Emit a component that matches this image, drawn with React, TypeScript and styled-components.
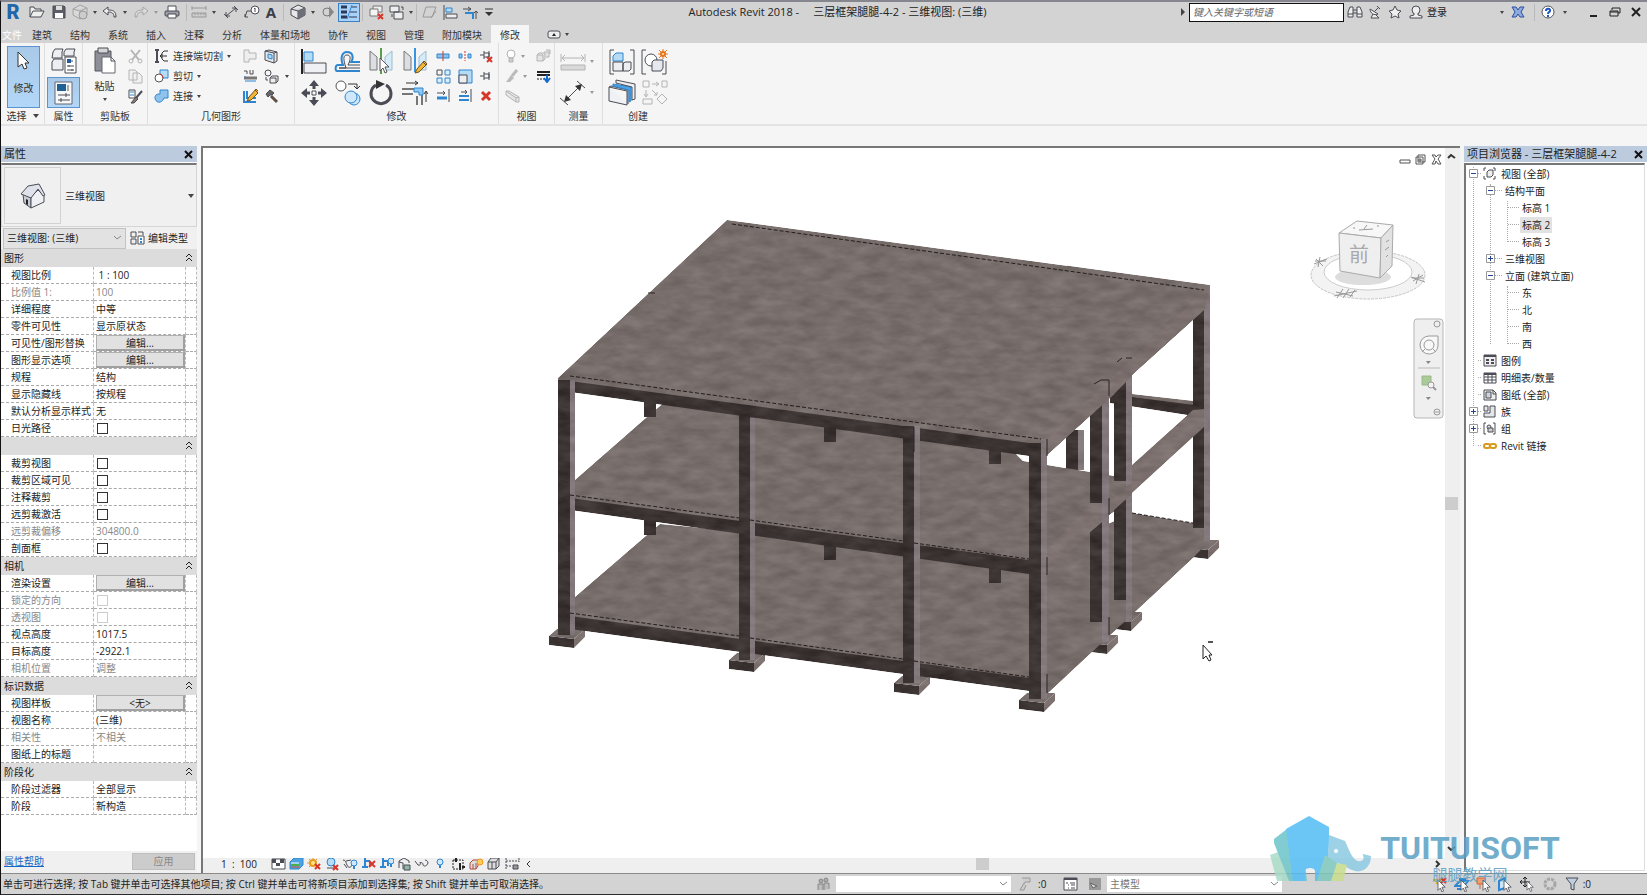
import React from 'react';
import styled, { createGlobalStyle, css } from 'styled-components';

const Global = createGlobalStyle`
  *, *::before, *::after { box-sizing: border-box; }
  body { margin: 0; background: #f5f5f5; }
  body, button, input, select, table {
    font-family: "Open Sans", "Noto Sans CJK SC", sans-serif;
    font-size: 10px;
    line-height: 14px;
    color: #222;
  }
  button, select, input { margin: 0; padding: 0; }
  ul { list-style: none; margin: 0; padding: 0; }
`;

/* ---------- icon drawings ---------- */

const D = '#4b4c55';
const B = '#2f86d0';
const L = '#b5dbf5';
const G = '#b4b4b4';
const RED = '#d8352a';

type IconDef = [number, number, React.ReactNode];

const cursor = 'M0 0V13L3 10L5 15L7 14L5 9H9Z';

const redX = (x: number, y: number, s = 5) => (
  <path d={`M${x} ${y}l${s} ${s}m0 ${-s}l${-s} ${s}`} stroke={RED} strokeWidth="2" />
);
const bulb = (x: number, y: number) => (
  <g><circle cx={x} cy={y} r="3" fill="#cfe8fb" stroke={B} /><path d={`M${x} ${y + 3}v3`} stroke={B} strokeWidth="2" /></g>
);
const pencil = (x: number, y: number) => (
  <g transform={`translate(${x} ${y})`}>
    <path d="M0 12L2 8L9 0L12 3L4 11Z" fill="#f2b632" stroke="#6b5424" /><path d="M8 1L11 4" stroke="#8b3d3d" />
  </g>
);
const cube = (c: string, f: string) => (
  <path d="M1 5L8 1L15 4V11L8 15L1 11ZM1 5L8 7L15 4M8 7V15" stroke={c} fill={f} />
);

const ICONS: Record<string, IconDef> = {
  open: [16, 14, <path d="M1 12V2H5L6 4H12V6M1 12L4 6H15L12 12Z" fill="#eee" />],
  save: [14, 14, <><path d="M1 1H12L13 2V13H1Z" fill="#5c5e66" /><path d="M4 1H10V5H4Z" fill="#ddd" stroke="none" /><path d="M3 8H11V13H3Z" fill="#fff" stroke="none" /></>],
  sync: [16, 16, <>{cube('#a2a2a2', '#d8d8d8')}<circle cx="11" cy="11" r="4" fill="#ccc" stroke="#999" /></>],
  undo: [16, 14, <path d="M6 2L1 6L6 10V7C10 7 12 8 12 12H14C14 6 11 5 6 5Z" fill="#eee" />],
  redo: [16, 14, <path d="M10 2L15 6L10 10V7C6 7 4 8 4 12H2C2 6 5 5 10 5Z" fill="#ddd" stroke="#a5a5a5" />],
  print: [16, 14, <><path d="M4 6V1H12V6" fill="#fff" /><rect x="1" y="6" width="14" height="5" rx="1" fill="#9c9da4" /><path d="M4 9H12V13H4Z" fill="#fff" /></>],
  ruler: [16, 14, <><path d="M1 3H15M1 1V5M15 1V5" stroke="#999" /><path d="M1 8H15V12H1ZM4 8V10M7 8V10M10 8V10M13 8V10" stroke="#999" fill="#ccc" /></>],
  dim: [16, 14, <path d="M3 11L13 3M1 9L5 13M11 1L15 5M3 11V7M3 11H7M13 3H9M13 3V7" />],
  tag: [16, 14, <><circle cx="11" cy="5" r="4" fill="#fff" /><path d="M11 3V7M10 4L11 3M7 6H3L1 12M1 9V12H4" /></>],
  cube: [16, 16, <>{cube(D, '#e8e8ea')}<path d="M8 7L15 4V11L8 15Z" fill="#6c6e78" stroke="none" /></>],
  section: [14, 14, <><circle cx="6" cy="7" r="4" stroke="#777" /><path d="M8 1L13 7L8 13Z" fill="#888" stroke="none" /></>],
  thin: [18, 14, <><path d="M1 2H7M1 7H7M1 12H7" stroke="#2b3a5a" strokeWidth="3" /><path d="M11 2H17M10 7H17M9 12H17" stroke="#2b3a5a" /><path d="M12 0L7 14" stroke={B} /></>],
  closeHidden: [15, 15, <><path d="M4 1H13V7H4Z" fill="#eee" stroke="#777" /><path d="M1 4H9V11H1Z" fill="#f4f4f4" stroke="#777" />{redX(9, 9)}</>],
  windows: [16, 15, <><path d="M1 1H10V7H1ZM5 7H14V14H5Z" fill="#eee" /><path d="M12 2H14V5M3 9V12" /></>],
  slope: [16, 14, <path d="M4 2H14L10 12H1ZM14 6L9 13" stroke="#999" />],
  align: [15, 15, <><path d="M1 0V15" /><path d="M3 3H9V7H3Z" fill={L} stroke={B} /><path d="M3 9H14V13H3Z" fill="#eee" /></>],
  trim: [16, 15, <><path d="M1 4H9M9 4L6 2M9 4L6 6" /><path d="M3 8H11V14" stroke={B} strokeWidth="2" /><path d="M14 14V6M12 8L14 6L16 8" /></>],
  customize: [10, 9, <><path d="M1 1H9" stroke="#333" /><path d="M1 4H9L5 8Z" fill="#333" stroke="none" /></>],
  binoculars: [16, 14, <path d="M1 12V7L3 2H6V12ZM15 12V7L13 2H10V12ZM6 5H10M6 8H10M1 9H6M10 9H15" fill="#eee" />],
  dish: [14, 14, <path d="M2 4C2 8 6 11 10 9ZM7 6L11 2M9 1L12 4M5 9L3 13H11L8 10" fill="#eee" />],
  star: [14, 14, <path d="M7 1L9 5L13 6L10 9L11 13L7 11L3 13L4 9L1 6L5 5Z" fill="#eee" />],
  user: [14, 14, <><circle cx="7" cy="5" r="4" fill="#eee" /><path d="M5 8V10L1 11V13H13V11L9 10V8" fill="#eee" /></>],
  exchange: [14, 14, <path d="M1 2H5L7 5L9 2H13L10 7L13 12H9L7 9L5 12H1L4 7Z" fill="#8dabdc" stroke="#2d4f9e" />],
  help: [15, 15, <><circle cx="7" cy="7" r="6" fill="#fff" stroke="#555" /><path d="M5 6C5 3 10 3 9 6C9 7 7 7 7 9M7 10V12" stroke="#1c55c4" strokeWidth="2" /></>],
  min: [10, 12, <path d="M1 10H8" strokeWidth="2" stroke="#222" />],
  restore: [12, 12, <path d="M3 4V2H11V7H9M1 5H9V10H1ZM1 6H9" stroke="#222" />],
  close: [12, 12, <path d="M2 2L10 10M10 2L2 10" stroke="#222" strokeWidth="2" />],
  arrow: [13, 20, <path d="M1 1V16L5 13L7 18L10 17L8 12H12Z" fill="#fff" stroke="#333" />],
  family: [26, 26, <><path d="M2 4L4 1H12L11 4V10H1ZM13 4L15 1H24L23 4V8H13ZM1 14L3 11H12V22H1Z" fill="#eceef2" /><path d="M14 9H25V25H14Z" fill="#fff" /><path d="M16 11H20V15H16Z" fill="#1f5c99" stroke="none" /><path d="M16 18H23M16 22H23M21 12V14M18 17V19M21 21V23" /></>],
  props: [20, 24, <><path d="M1 1H18V23H1Z" fill="#f7f7f7" stroke="#667" /><path d="M3 3H12V10H3Z" fill="#1f6096" stroke="none" /><path d="M14 4V10" stroke="#aaa" strokeWidth="2" /><path d="M4 14H16M4 19H16M12 12V16M7 17V21" /></>],
  paste: [24, 27, <><path d="M2 4H18V24H2Z" fill="#8d8e97" stroke="#55565e" /><path d="M5 1H15V6H5Z" fill="#d5d6da" /><path d="M9 10H18L22 14V26H9Z" fill="#fff" stroke="#66676f" /><path d="M18 10V14H22" /></>],
  scissors: [15, 15, <><path d="M3 1L11 11M12 1L4 11" stroke={G} strokeWidth="2" /><circle cx="3" cy="12" r="2" stroke={G} /><circle cx="12" cy="12" r="2" stroke={G} /></>],
  copyClip: [15, 15, <path d="M1 1H7L9 3V11H1ZM5 4H11L14 7V14H5Z" stroke={G} fill="#f1f1f1" />],
  match: [15, 15, <><path d="M1 1H7V9H1Z" fill="#fff" /><path d="M2 3H6M2 6H6" stroke={B} /><path d="M14 2L8 9" strokeWidth="2" /><path d="M8 8L10 10L6 14H3Z" fill="#8a7a6c" /></>],
  cope: [15, 14, <><path d="M1 1H5M1 13H5M3 1V13" strokeWidth="2" /><path d="M14 2H10L8 4V10L10 12H14M13 7H6M8 5L6 7L8 9" stroke="#333" /></>],
  cut: [15, 15, <><path d="M6 1H14V9H6Z" fill={L} stroke={B} /><circle cx="5" cy="9" r="4" fill="#fff" stroke="#555" /><path d="M6 5C8 6 9 7 9 9" stroke={RED} /></>],
  join: [15, 15, <path d="M6 1H14V9H10C9 12 6 14 4 13C1 12 0 8 2 6C3 5 5 5 6 5Z" fill="#8fc3ec" stroke={B} />],
  joinGray: [15, 14, <path d="M1 1H6V4H13V10H6V13H1Z" stroke={G} fill="#eee" />],
  splitFace: [14, 15, <><path d="M1 2L10 4V14L1 11ZM10 4L13 3V12L10 14M1 2L5 1L13 3" fill="#e4e6ea" /><path d="M4 5L8 6V10L4 9Z" fill={L} stroke={B} /></>],
  wallJoin: [15, 14, <><path d="M1 2H4V5M7 1V5H10V1" /><path d="M1 9H14" strokeWidth="3" stroke="#777" /><path d="M2 12H13M2 7V9" stroke={B} /></>],
  paintMini: [15, 15, <><circle cx="4" cy="4" r="3" /><path d="M6 9H12V14H6ZM6 9L8 7H14V12L12 14" fill="#eee" /><path d="M2 8V11H4" /></>],
  lJoin: [16, 15, <><path d="M2 2V13H14M5 2V9H14" stroke={B} strokeWidth="2" />{pencil(5, 0)}</>],
  hammer: [15, 15, <><path d="M2 5L6 1L10 4L8 6L6 6L4 8Z" fill="#666" /><path d="M7 7L13 13" stroke="#5f5048" strokeWidth="3" /></>],
  bigAlign: [26, 26, <><path d="M1 0V25" strokeWidth="2" stroke="#222" /><path d="M3 3H12V12H3Z" fill={L} stroke={B} /><path d="M3 14H25V24H3Z" fill="#eef0f4" /></>],
  offset: [27, 24, <><path d="M26 21H3C1 21 1 15 4 15H9C6 8 8 2 13 2C19 2 20 8 17 12H26" stroke={B} strokeWidth="2" /><path d="M26 18H5M5 18H12C9 9 9 5 13 5C17 5 17 9 14 15H26" /></>],
  mirrorPick: [26, 27, <><path d="M2 3L9 9V22L2 22Z" fill="#dcdee3" stroke="#777" /><path d="M24 3L17 9V22H24Z" fill="#d6ebf8" stroke="#9bbdd0" /><path d="M13 0V26" stroke="#57a046" strokeWidth="2" /><path transform="translate(12 10)" d={cursor} fill="#fff" stroke="#555" /></>],
  mirrorDraw: [26, 27, <><path d="M2 3L9 9V22L2 22Z" fill="#dcdee3" stroke="#777" /><path d="M24 3L17 9V22H24Z" fill="#d6ebf8" stroke="#9bbdd0" /><path d="M13 0V24" stroke="#3894e0" strokeWidth="2" />{pencil(13, 13)}</>],
  move: [26, 26, <><path d="M13 2V9M13 17V24M2 13H9M17 13H24" strokeWidth="3" /><path d="M13 0L18 6H8ZM13 26L18 20H8ZM0 13L6 8V18ZM26 13L20 8V18Z" fill={D} stroke="none" /><path d="M11 11H15V15H11Z" fill="#fff" /></>],
  copy: [26, 26, <><circle cx="6" cy="6" r="5" fill="#fff" stroke="#555" /><path d="M13 4H22V8M19 6L22 9L25 6" stroke="#333" /><circle cx="19" cy="19" r="6" fill="#cfe7fa" stroke={B} /><circle cx="16" cy="17" r="6" fill="#cfe7fa" stroke={B} /></>],
  rotate: [26, 26, <><path d="M8 5A10 10 0 1 0 18 5" strokeWidth="3" /><path d="M8 0L17 4L8 9Z" fill="#333" stroke="none" /></>],
  trimBig: [26, 26, <><path d="M4 3H16M13 1L16 3L13 5" stroke="#333" /><path d="M0 9H13M0 14H11M15 16V25M20 14V25" strokeWidth="2" stroke="#777" /><path d="M12 8H21V15H17V12H12Z" fill="#8fc8f2" stroke={B} /><path d="M24 22V12M22 14L24 11L26 14" stroke="#333" /></>],
  splitA: [14, 10, <><path d="M1 3H13V7H1Z" fill="#8cc3ee" stroke={B} /><path d="M7 0V10" stroke={RED} /></>],
  splitB: [14, 10, <><path d="M1 3H4V7H1ZM10 3H13V7H10Z" fill="#8cc3ee" stroke={B} /><path d="M7 0V10" stroke={RED} strokeDasharray="2 1" /></>],
  unpin: [14, 14, <><path d="M5 2V10M5 4H10V8H5M10 2V10M1 6H5" />{redX(8, 8)}</>],
  array: [15, 15, <><path d="M1 1H6V6H1Z" /><path d="M9 1H14V6H9ZM1 9H6V14H1ZM9 9H14V14H9Z" stroke={B} fill="#dcedfa" /></>],
  scale: [15, 15, <><path d="M1 1H14V14H1Z" fill={L} stroke={B} /><path d="M1 6H9V14H1Z" fill="#eee" /></>],
  pin: [12, 12, <path d="M4 2V10M4 4H9V8H4M9 2V10M0 6H4" />],
  trimOne: [15, 14, <><path d="M1 4H9M7 2L9 4L7 6M13 0V13" /><path d="M1 9H11" stroke={B} strokeWidth="3" /></>],
  trimMulti: [15, 14, <><path d="M3 3H9M7 1L9 3L7 5M13 0V13" /><path d="M1 7H11M1 11H11" stroke={B} strokeWidth="2" /></>],
  del: [12, 12, <path d="M2 2L10 10M10 2L2 10" stroke={RED} strokeWidth="3" />],
  bulbGray: [12, 15, <><circle cx="6" cy="5" r="4" stroke={G} fill="#fff" /><path d="M4 9H8V13H4Z" fill="#ccc" stroke={G} /></>],
  viewsGray: [15, 14, <path d="M1 6H7V12H1ZM1 6L3 4H9V10L7 12M8 3H13V8H10M10 1H14V5" stroke={G} fill="#e4e4e4" />],
  brushGray: [14, 14, <><path d="M12 1L7 7" stroke="#bbb" strokeWidth="3" /><path d="M6 6L9 9L5 13H1Z" fill="#bbb" stroke="none" /></>],
  lineWork: [15, 13, <><path d="M1 2H14M1 5H14" stroke="#222" strokeWidth="2" /><path d="M1 9H8" stroke="#222" strokeDasharray="2 1" /><path d="M11 5V11M8 8L11 12L14 8" stroke="#1469cf" strokeWidth="2" /></>],
  beamGray: [15, 14, <path d="M1 2H4L14 8V13H11L1 6ZM1 2L11 9V13M11 9L14 8" stroke={G} fill="#e6e6e6" />],
  measure: [26, 18, <><path d="M2 5H24M5 2L2 5L5 8M21 2L24 5L21 8M1 1V9M25 1V9" stroke={G} /><path d="M1 12H25V17H1Z" fill="#d9d9d9" stroke={G} /></>],
  dimBig: [26, 26, <><path d="M5 21L21 5M0 18L8 25M17 1L25 8" /><path d="M4 22L6 15L11 20ZM22 4L20 11L15 6Z" fill="#333" stroke="none" /></>],
  assembly: [26, 26, <><path d="M5 1H1V25H5M21 1H25V25H21" /><path d="M4 7L7 4H14V12H4Z" fill={L} stroke={B} /><path d="M4 13H14V22H4ZM14 15L16 13H22V20L20 22H14Z" fill="#eceef2" /></>],
  parts: [27, 26, <><path d="M5 1H1V25H5M25 12V25H21" /><circle cx="10" cy="11" r="6" fill="#fff" /><path d="M11 13L13 11H22V19L20 22H11Z" fill="#e6e8ee" /><path d="M22 0V10M17 5H27M18 1L26 9M26 1L18 9" stroke="#e8741e" /><circle cx="22" cy="5" r="2" fill="#ffe9a8" stroke="#e8741e" strokeWidth="2" /></>],
  similar: [28, 27, <><path d="M1 8V22L19 26V12ZM1 8L3 7L20 11V25" fill="#f0f1f5" /><path d="M5 5L23 8V22L21 23V11L5 7Z" fill="#4ba3e6" stroke={B} /><path d="M8 1L27 5V20L24 21V8L8 4Z" fill="#eceef2" /></>],
  flow: [26, 25, <path d="M1 1H7V7H1ZM20 1H25V7H20ZM10 4H16M14 2L17 4L14 6M4 10V16M2 14L4 17L6 14M10 10L15 15M12 15H15V12M1 19H10V24H1ZM20 14L25 19L20 24L15 19Z" stroke={G} />],
  house: [28, 28, <><path d="M4 12L5 21L12 26V15Z" fill="#c9ccd6" /><path d="M12 15L19 8L25 14V20L12 26Z" fill="#eef0f4" /><path d="M2 12L9 4L20 2L26 13L24 14L19 7L12 16Z" fill="#dfe2ea" /><path d="M7 17L9 18V23L7 22Z" fill="#222" stroke="none" /></>],
  editType: [15, 14, <><path d="M1 1H6V6H1ZM8 1H13V4M1 8H6V13H1Z" /><path d="M8 5H14V13H8Z" fill="#fff" /><path d="M10 8H12M10 11H12" stroke={B} strokeWidth="2" /></>],
  vcMesh: [15, 12, <><path d="M1 1H14V11H1Z" fill="#fff" /><path d="M1 1H5V5H1ZM9 1H13V5H9ZM5 5H9V8H5Z" fill={D} stroke="none" /></>],
  vcBox: [15, 14, <><path d="M1 5L5 1H14V8L10 12H1Z" fill="#4ca3e2" stroke={B} /><path d="M2 6H10" stroke="#fff" /><path d="M2 8H10" stroke="#4bb04b" strokeWidth="2" /><path d="M2 10H10" stroke="#e05040" /></>],
  vcSun: [15, 14, <><circle cx="6" cy="6" r="3" fill="#ffe28a" stroke="#e89a1c" strokeWidth="2" /><path d="M6 0V2M0 6H2M2 2L3 3M10 2L9 3M2 10L3 9" stroke="#e89a1c" />{redX(8, 7)}</>],
  vcShadow: [15, 14, <><circle cx="6" cy="5" r="4" fill="#b9dcf6" stroke={B} /><path d="M2 11H9" />{redX(8, 8)}</>],
  vcTeapot: [16, 14, <><path d="M1 3C4 3 4 6 5 8C6 11 9 11 10 8M4 4L9 3M2 7L5 11" />{bulb(12, 6)}</>],
  vcCropX: [15, 14, <><path d="M4 1V11M1 10H7M4 4H9M9 4V9" stroke={B} strokeWidth="2" />{redX(8, 4, 6)}</>],
  vcCrop: [15, 14, <><path d="M4 1V11M1 10H7M4 4H9M9 4V9" stroke={B} strokeWidth="2" />{bulb(12, 4)}</>],
  vcLock: [15, 14, <><path d="M2 11V4L7 1L12 4V6M2 5L6 6V12" fill="#eee" /><path d="M7 8H13V13H7Z" fill="#8fb6a8" /></>],
  vcGlasses: [16, 12, <path d="M1 3L4 7C6 8 7 6 6 4M6 5C8 4 9 5 9 7C10 9 13 8 14 5C14 3 12 2 11 2" />],
  vcBulb: [9, 12, bulb(4, 4)],
  vcCrop2: [15, 14, <><path d="M2 3H12V12H2Z" strokeDasharray="2 1" stroke="#222" /><path d="M5 1V5M9 6V13M11 10H14" strokeWidth="2" stroke="#222" /></>],
  vcWorks: [15, 14, <><path d="M1 6L4 3H9V9L7 12H1ZM4 7V12M7 6V12" stroke="#b34b40" fill="#ddd" /><circle cx="11" cy="5" r="3" fill="#ffcb57" stroke="#e89a1c" /></>],
  vcBoxes: [14, 14, <path d="M1 5L4 1H12V9L9 12H1ZM1 5H9V12M5 5V12M9 5L12 1" fill="#ddd" />],
  vcDim: [15, 14, <><path d="M1 1V12M14 1V5M1 4H14M1 9H7" strokeDasharray="2 1" /><path d="M8 8H13V12H8Z" fill="#999" /></>],
  people: [15, 14, <><circle cx="5" cy="4" r="2" fill="#aaa" stroke="#888" /><circle cx="10" cy="3" r="2" fill="#aaa" stroke="#888" /><path d="M2 13V7H7V13M8 13V6H13V12" fill="#bbb" stroke="#888" /></>],
  editable: [14, 14, <path d="M4 1H12V5H7L6 7M6 6L2 13H6L8 8" fill="#ccc" stroke="#999" />],
  list: [15, 14, <><path d="M1 1H14V13H1Z" fill="#fff" /><path d="M1 2H14" strokeWidth="2" /><path d="M3 6H5M7 6H12M5 8H6M8 8H12M5 11H6M8 11H12" /></>],
  exclude: [14, 14, <><path d="M1 1H13V13H1Z" fill="#999" stroke="none" /><path d="M2 6L9 9L5 11Z" fill="#ddd" stroke="#666" /></>],
  selLink: [16, 15, <><path d="M1 3H8V7L4 6" stroke="#e0a82a" strokeWidth="2" />{redX(9, 1)}<path transform="translate(6 3) scale(.8)" d={cursor} fill="#fff" /></>],
  selUnder: [16, 15, <><path d="M1 9L6 4H14L10 9ZM3 12H8M5 2H12" stroke={B} strokeWidth="2" /><path transform="translate(7 3) scale(.8)" d={cursor} fill="#fff" /></>],
  selPin: [16, 15, <><path d="M1 1H9V7H1ZM4 7V12" stroke="#d4652a" fill="#f0a070" /><path transform="translate(7 3) scale(.8)" d={cursor} fill="#fff" /></>],
  selFace: [16, 15, <><path d="M1 4L7 1V11L1 13Z" stroke={B} fill="#cbe6fa" strokeWidth="2" /><path transform="translate(6 3) scale(.8)" d={cursor} fill="#fff" /></>],
  drag: [16, 15, <><path d="M5 0V10M0 5H10M3 2L5 0L7 2M3 8L5 10L7 8M2 3L0 5L2 7" stroke="#222" /><path transform="translate(7 4) scale(.7)" d={cursor} fill="#fff" /></>],
  gear: [14, 14, <circle cx="7" cy="7" r="5" stroke="#a6a6a6" strokeWidth="3" strokeDasharray="3 1" />],
  filter: [14, 14, <path d="M1 1H13L9 7V13L6 12V7Z" fill="#bfd0e0" />],
  tView: [13, 13, <><path d="M1 4V1H3M10 1H12V4M1 9V12H3M10 12H12V9" /><path d="M4 5L6 3H10V8L8 10H4Z" fill="#eee" /></>],
  tLegend: [14, 13, <><path d="M1 1H13V12H1Z" fill="#eee" /><path d="M1 2H13" strokeWidth="2" /><path d="M3 6H6M3 9H6M8 6H11M8 9H11" strokeWidth="2" /></>],
  tTable: [14, 12, <><path d="M1 1H13V11H1ZM1 5H13M1 8H13M5 3V11M9 3V11" fill="#fff" /><path d="M1 2H13" strokeWidth="2" /></>],
  tSheet: [14, 12, <><path d="M1 1H10L13 4V11H1Z" fill="#eee" /><path d="M3 3H8V9H3Z" fill="#cfd4dc" /><path d="M10 1V5H13" /></>],
  tFamily: [13, 13, <path d="M1 1H5V6H1ZM7 1H12V12H1V8H7Z" fill="#e4e6ea" />],
  tGroup: [13, 13, <><path d="M3 1H1V12H3M10 1H12V12H10" /><circle cx="6" cy="5" r="2" fill="#ddd" /><path d="M5 6H10V10H5Z" fill="#ccc" /></>],
  tLink: [14, 8, <><rect x="1" y="2" width="6" height="4" rx="2" stroke="#d99a1c" strokeWidth="2" /><rect x="7" y="2" width="6" height="4" rx="2" stroke="#d99a1c" strokeWidth="2" /></>],
  collapse: [8, 10, <path d="M1 4L4 1L7 4M1 8L4 5L7 8" stroke="#222" />],
  panelX: [9, 9, <path d="M1 1L8 8M8 1L1 8" stroke="#111" strokeWidth="2" />],
  chevron: [9, 6, <path d="M1 1L4 4L8 1" stroke="#888" />],
  ribbonMin: [14, 9, <><rect x="1" y="1" width="12" height="7" rx="2" fill="#eee" /><path d="M7 3L9 6H5Z" fill="#222" stroke="none" /></>],
};

const IconSvg = styled.svg`
  display: block;
  flex: none;
`;

const Icon = ({ n }: { n: string }) => {
  const [w, h, art] = ICONS[n];
  return (
    <IconSvg width={w} height={h} viewBox={`0 0 ${w} ${h}`} fill="none" stroke={D} aria-hidden="true">
      {art}
    </IconSvg>
  );
};

const Caret = styled.span<{ $dim?: boolean; $big?: boolean }>`
  flex: none;
  border: ${p => (p.$big ? 3 : 2)}px solid transparent;
  border-top: ${p => (p.$big ? 4 : 3)}px solid ${p => (p.$dim ? '#999' : '#444')};
  border-bottom: 0;
`;

/* ---------- window and title bar ---------- */

const Window = styled.div`
  position: relative;
  display: flex;
  flex-direction: column;
  min-height: 100vh;
  min-width: 1200px;
  border-left: 1px solid #111;
  border-top: 2px solid #85868e;
  border-bottom: 2px solid #2b2b30;
  background: #f5f5f5;
`;

const TitleBar = styled.header`
  display: flex;
  align-items: center;
  height: 23px;
  padding-bottom: 3px;
  background: #d3d3d3;
`;

const Tools = styled.div`
  display: flex;
  align-items: center;
  height: 20px;
`;

const ToolButton = styled.button<{ $w: number; $on?: boolean }>`
  display: flex;
  flex: none;
  align-items: center;
  justify-content: center;
  width: ${p => p.$w}px;
  height: 19px;
  border: 0;
  background: none;
  ${p => p.$on && css`
    background: #a8d2f7;
    border: 1px solid #3b7fc4;
  `}
`;

const Divider = styled.span`
  width: 1px;
  height: 17px;
  margin: 0 3px 0 2px;
  background: #b9b9b9;
`;

const Letter = styled.span<{ $logo?: boolean }>`
  font-family: ${p => (p.$logo ? 'Roboto' : '"Open Sans"')}, sans-serif;
  font-weight: ${p => (p.$logo ? 900 : 700)};
  font-size: ${p => (p.$logo ? 20 : 15)}px;
  line-height: 18px;
  color: ${p => (p.$logo ? '#1f66ab' : '#3c3d44')};
`;

const WindowTitle = styled.h1`
  flex: 1;
  margin: 0;
  text-align: center;
  font-size: 11px;
  font-weight: 400;
  white-space: pre;
`;

const Search = styled.input`
  width: 155px;
  height: 19px;
  padding: 0 3px;
  border: 1px solid #111;
  background: #fff;
  &::placeholder { font-style: italic; color: #666; opacity: 1; }
`;

const SignIn = styled.button`
  width: 73px;
  padding: 0;
  border: 0;
  background: none;
  text-align: left;
`;

const WindowButtons = styled.div`
  display: flex;
  margin-left: 11px;
`;

const quick: [string, number][] = [
  ['open', 24], ['save', 20], ['sync', 22], ['v', 8], ['undo', 22], ['v', 8], ['redo', 23], ['v-', 8], ['print', 24],
  ['|', 6], ['ruler', 18], ['v', 12], ['dim', 22], ['tag', 19], ['A', 20], ['|', 6], ['cube', 22], ['v', 8],
  ['section', 21], ['thin', 22], ['|', 6], ['closeHidden', 20], ['windows', 21], ['v', 7], ['|', 6], ['slope', 20], ['align', 20], ['trim', 20], ['customize', 18],
];

const TitleRow = () => (
  <TitleBar>
    <Tools>
      <ToolButton $w={24} aria-label="应用程序菜单"><Letter $logo>R</Letter></ToolButton>
      {quick.map(([n, w], i) => {
        if (n === '|') return <Divider key={i} />;
        return (
          <ToolButton key={i} $w={w} $on={n === 'thin'} aria-label={`快速访问 ${i + 1}`}>
            {n === 'v' || n === 'v-' ? <Caret $dim={n === 'v-'} /> : n === 'A' ? <Letter>A</Letter> : <Icon n={n} />}
          </ToolButton>
        );
      })}
    </Tools>
    <WindowTitle>{'Autodesk Revit 2018 -     三层框架腿腿-4-2 - 三维视图: (三维)'}</WindowTitle>
    <Tools>
      <ToolButton $w={12} aria-label="展开搜索">
        <IconSvg width="4" height="8" viewBox="0 0 4 8"><path d="M0 0L4 4L0 8Z" fill="#444" /></IconSvg>
      </ToolButton>
      <Search placeholder="键入关键字或短语" aria-label="搜索" />
      <ToolButton $w={21} aria-label="查找"><Icon n="binoculars" /></ToolButton>
      <ToolButton $w={20} aria-label="通讯中心"><Icon n="dish" /></ToolButton>
      <ToolButton $w={20} aria-label="收藏夹"><Icon n="star" /></ToolButton>
      <ToolButton $w={22} aria-label="用户"><Icon n="user" /></ToolButton>
      <SignIn>登录</SignIn>
      <Caret />
      <ToolButton $w={28} aria-label="应用商店"><Icon n="exchange" /></ToolButton>
      <Divider />
      <ToolButton $w={20} aria-label="帮助"><Icon n="help" /></ToolButton>
      <ToolButton $w={14} aria-label="帮助菜单"><Caret /></ToolButton>
      <WindowButtons>
        <ToolButton $w={21} aria-label="最小化"><Icon n="min" /></ToolButton>
        <ToolButton $w={21} aria-label="还原"><Icon n="restore" /></ToolButton>
        <ToolButton $w={22} aria-label="关闭"><Icon n="close" /></ToolButton>
      </WindowButtons>
    </Tools>
  </TitleBar>
);

const TabBar = styled.nav`
  display: flex;
  height: 18px;
  background: #d3d3d3;
`;

const Tab = styled.button<{ $on?: boolean; $file?: boolean }>`
  height: 18px;
  padding: 1px 9px 0;
  border: 0;
  background: ${p => (p.$on ? '#f5f5f5' : 'none')};
  color: ${p => (p.$file ? '#fff' : '#333')};
  ${p => p.$file && css`padding: 1px 1px 0;`}
`;

const TabEnd = styled.div`
  display: flex;
  align-items: center;
  gap: 4px;
  padding-left: 18px;
`;

/* ---------- ribbon ---------- */

const Ribbon = styled.section`
  display: flex;
  height: 83px;
  border-bottom: 2px solid #e3e3e3;
`;

const Panel = styled.div<{ $w: number; $last?: boolean }>`
  display: flex;
  flex-direction: column;
  width: ${p => p.$w}px;
  border-right: ${p => (p.$last ? 0 : 1)}px solid #dedede;
`;

const PanelBody = styled.div<{ $pad?: number }>`
  display: flex;
  height: 65px;
  padding: 3px 2px 0 ${p => p.$pad ?? 2}px;
`;

const PanelName = styled.div`
  display: flex;
  align-items: center;
  justify-content: center;
  gap: 6px;
  height: 15px;
  color: #333;
`;

const Stack = styled.div<{ $w: number; $h?: number }>`
  display: grid;
  width: ${p => p.$w}px;
  grid-auto-rows: ${p => p.$h ?? 20}px;
  flex: none;
`;

const RibbonButton = styled.button<{ $left?: boolean }>`
  display: flex;
  align-items: center;
  justify-content: ${p => (p.$left ? 'flex-start' : 'center')};
  gap: 4px;
  border: 0;
  background: none;
  white-space: nowrap;
  color: #333;
`;

const TallButton = styled.button<{ $on?: boolean; $w: number; $h: number }>`
  display: flex;
  flex-direction: column;
  align-items: center;
  justify-content: center;
  gap: 5px;
  width: ${p => p.$w}px;
  height: ${p => p.$h}px;
  flex: none;
  color: #333;
  border: 1px solid ${p => (p.$on ? '#5a93cd' : 'transparent')};
  background: ${p => (p.$on ? 'linear-gradient(#a9c9e8, #b3d7f8)' : 'none')};
`;

const ModifyButton = styled(TallButton)`
  justify-content: flex-start;
  gap: 10px;
  padding-top: 4px;
`;

const IconStack = ({ names, w, h, carets = [] }: { names: string[]; w: number; h?: number; carets?: number[] }) => (
  <Stack $w={w} $h={h}>
    {names.map((n, i) => (
      <RibbonButton key={n} aria-label={n} $left={carets.length > 0}>
        <Icon n={n} />
        {carets.includes(i) && <Caret $dim />}
      </RibbonButton>
    ))}
  </Stack>
);

const RibbonArea = () => (
  <Ribbon>
    <Panel $w={44}>
      <PanelBody $pad={6}>
        <ModifyButton $on $w={33} $h={62}><Icon n="arrow" />修改</ModifyButton>
      </PanelBody>
      <PanelName>选择<Caret $big /></PanelName>
    </Panel>
    <Panel $w={38}>
      <PanelBody>
        <Stack $w={33} $h={31}>
          <TallButton $w={33} $h={30} aria-label="族类型"><Icon n="family" /></TallButton>
          <TallButton $on $w={33} $h={31} aria-label="属性"><Icon n="props" /></TallButton>
        </Stack>
      </PanelBody>
      <PanelName>属性</PanelName>
    </Panel>
    <Panel $w={65}>
      <PanelBody>
        <TallButton $w={39} $h={56}><Icon n="paste" />粘贴<Caret /></TallButton>
        <IconStack w={22} names={['scissors', 'copyClip', 'match']} />
      </PanelBody>
      <PanelName>剪贴板</PanelName>
    </Panel>
    <Panel $w={147}>
      <PanelBody $pad={6}>
        <Stack $w={86}>
          <RibbonButton $left><Icon n="cope" />连接端切割<Caret /></RibbonButton>
          <RibbonButton $left><Icon n="cut" />剪切<Caret /></RibbonButton>
          <RibbonButton $left><Icon n="join" />连接<Caret /></RibbonButton>
        </Stack>
        <IconStack w={20} names={['joinGray', 'wallJoin', 'lJoin']} />
        <IconStack w={22} names={['splitFace', 'paintMini', 'hammer']} />
        <Stack $w={9} $h={61}><RibbonButton aria-label="填色"><Caret /></RibbonButton></Stack>
      </PanelBody>
      <PanelName>几何图形</PanelName>
    </Panel>
    <Panel $w={204}>
      <PanelBody>
        <IconStack w={34} h={31} names={['bigAlign', 'move']} />
        <IconStack w={33} h={31} names={['offset', 'copy']} />
        <IconStack w={34} h={31} names={['mirrorPick', 'rotate']} />
        <IconStack w={34} h={31} names={['mirrorDraw', 'trimBig']} />
        <IconStack w={22} names={['splitA', 'array', 'trimOne']} />
        <IconStack w={22} names={['splitB', 'scale', 'trimMulti']} />
        <IconStack w={20} names={['unpin', 'pin', 'del']} />
      </PanelBody>
      <PanelName>修改</PanelName>
    </Panel>
    <Panel $w={56}>
      <PanelBody $pad={6}>
        <IconStack w={28} names={['bulbGray', 'brushGray', 'beamGray']} carets={[0, 1]} />
        <IconStack w={20} names={['viewsGray', 'lineWork']} />
      </PanelBody>
      <PanelName>视图</PanelName>
    </Panel>
    <Panel $w={48}>
      <PanelBody $pad={5}>
        <IconStack w={41} h={31} names={['measure', 'dimBig']} carets={[0, 1]} />
      </PanelBody>
      <PanelName>测量</PanelName>
    </Panel>
    <Panel $w={70} $last>
      <PanelBody>
        <IconStack w={33} h={31} names={['assembly', 'similar']} />
        <IconStack w={33} h={31} names={['parts', 'flow']} />
      </PanelBody>
      <PanelName>创建</PanelName>
    </Panel>
  </Ribbon>
);

/* ---------- properties palette ---------- */

const Workspace = styled.main`
  display: grid;
  grid-template-columns: 196px minmax(0, 1fr) 183px;
  column-gap: 4px;
  flex: 1;
  padding-top: 20px;
`;

const Palette = styled.aside`
  display: flex;
  flex-direction: column;
  background: #fff;
`;

const PaletteTitle = styled.h2`
  display: flex;
  align-items: center;
  justify-content: space-between;
  height: 16px;
  margin: 0 0 1px;
  padding: 0 4px 0 3px;
  background: #bccbde;
  font-size: 11px;
  font-weight: 400;
  white-space: nowrap;
`;

const TypePicker = styled.button`
  display: flex;
  align-items: center;
  height: 64px;
  padding: 3px 2px;
  gap: 4px;
  border: 1px solid #d5d5d5;
  border-top: 2px solid #777;
  background: #f0f0f0;
  text-align: left;
`;

const Thumb = styled.span`
  display: flex;
  align-items: center;
  justify-content: center;
  width: 57px;
  height: 57px;
  border: 1px solid #d2d2d2;
`;

const Grow = styled.span`
  flex: 1;
`;

const InstanceRow = styled.div`
  display: flex;
  align-items: center;
  height: 22px;
  padding-left: 2px;
  gap: 4px;
  background: #f0f0f0;
`;

const Combo = styled.label<{ $w: number; $gray?: boolean }>`
  display: grid;
  flex: none;
  align-items: center;
  width: ${p => p.$w}px;
  height: ${p => (p.$gray ? 21 : 16)}px;
  border: ${p => (p.$gray ? '1px solid #c2c2c2' : '0')};
  background: ${p => (p.$gray ? '#e2e2e2' : '#fff')};
  & > select, & > svg { grid-area: 1 / 1; }
  & > svg { justify-self: end; margin-right: 3px; pointer-events: none; }
`;

const Select = styled.select<{ $dim?: boolean }>`
  appearance: none;
  width: 100%;
  padding: 0 3px;
  border: 0;
  background: none;
  color: ${p => (p.$dim ? '#777' : '#222')};
`;

const PlainButton = styled.button`
  display: flex;
  align-items: center;
  gap: 3px;
  border: 0;
  background: none;
  white-space: nowrap;
`;

const PropTable = styled.table`
  width: 100%;
  table-layout: fixed;
  border-collapse: separate;
  border-spacing: 0;
`;

const GroupCell = styled.th`
  height: 18px;
  padding: 0 4px 0 3px;
  background: #dcdcdc;
  text-align: left;
  font-weight: 400;
`;

const GroupLine = styled.span`
  display: flex;
  align-items: center;
  justify-content: space-between;
`;

const PropCell = styled.td<{ $dim?: boolean; $name?: boolean }>`
  height: 17px;
  padding: 0 0 0 ${p => (p.$name ? 10 : 2)}px;
  border-bottom: 1px dashed #aaa;
  border-right: 1px dashed #bbb;
  color: ${p => (p.$dim ? '#888' : '#222')};
  white-space: nowrap;
`;

const EditButton = styled.button`
  display: block;
  width: 89px;
  height: 16px;
  border: 1px solid #b0b0b0;
  border-right: 2px solid #a0a0a0;
  border-bottom: 2px solid #a0a0a0;
  background: #e1e1e1;
  line-height: 12px;
`;

const Check = styled.input`
  appearance: none;
  display: block;
  width: 11px;
  height: 11px;
  margin: 1px;
  border: 1px solid #333;
  background: #fff;
  &:disabled { border-color: #ccc; }
`;

const PaletteFoot = styled.div`
  display: flex;
  align-items: center;
  justify-content: space-between;
  height: 22px;
  margin-top: auto;
  padding: 0 2px 2px 3px;
  background: #f0f0f0;
`;

const HelpLink = styled.a`
  color: #1268c4;
`;

const Apply = styled.button`
  width: 63px;
  height: 17px;
  border: 1px solid #bfbfbf;
  background: #ccc;
  color: #888;
`;

type Prop = [string, string, string?];
const groups: [string, Prop[]][] = [
  ['图形', [
    ['视图比例', ' 1 : 100'], ['比例值 1:', '100', 'dim'], ['详细程度', '中等'], ['零件可见性', '显示原状态'],
    ['可见性/图形替换', '编辑...', 'btn'], ['图形显示选项', '编辑...', 'btn'], ['规程', '结构'], ['显示隐藏线', '按规程'],
    ['默认分析显示样式', '无'], ['日光路径', '', 'chk'],
  ]],
  ['', [
    ['裁剪视图', '', 'chk'], ['裁剪区域可见', '', 'chk'], ['注释裁剪', '', 'chk'], ['远剪裁激活', '', 'chk'],
    ['远剪裁偏移', '304800.0', 'dim'], ['剖面框', '', 'chk'],
  ]],
  ['相机', [
    ['渲染设置', '编辑...', 'btn'], ['锁定的方向', '', 'chk-off'], ['透视图', '', 'chk-off'], ['视点高度', '1017.5'],
    ['目标高度', '-2922.1'], ['相机位置', '调整', 'dim'],
  ]],
  ['标识数据', [['视图样板', '<无>', 'btn'], ['视图名称', '(三维)'], ['相关性', '不相关', 'dim'], ['图纸上的标题', '']]],
  ['阶段化', [['阶段过滤器', '全部显示'], ['阶段', '新构造']]],
];

const NameCol = styled.col`
  width: 93px;
`;

const EndCol = styled.col`
  width: 11px;
`;

const Properties = () => (
  <Palette>
    <PaletteTitle>属性<Icon n="panelX" /></PaletteTitle>
    <TypePicker>
      <Thumb><Icon n="house" /></Thumb>
      <Grow>三维视图</Grow>
      <Caret $big />
    </TypePicker>
    <InstanceRow>
      <Combo $w={123} $gray>
        <Select aria-label="实例"><option>三维视图: (三维)</option></Select>
        <Icon n="chevron" />
      </Combo>
      <PlainButton><Icon n="editType" />编辑类型</PlainButton>
    </InstanceRow>
    <PropTable>
      <colgroup><NameCol /><col /><EndCol /></colgroup>
      <tbody>
        {groups.map(([title, rows], g) => (
          <React.Fragment key={g}>
            <tr><GroupCell colSpan={3}><GroupLine><span>{title}</span><Icon n="collapse" /></GroupLine></GroupCell></tr>
            {rows.map(([name, value, kind]) => {
              const dim = kind === 'dim' || kind === 'chk-off';
              const check = kind === 'chk' || kind === 'chk-off';
              return (
                <tr key={name}>
                  <PropCell $name $dim={dim}>{check ? <label htmlFor={name}>{name}</label> : name}</PropCell>
                  <PropCell $dim={dim}>
                    {check ? <Check type="checkbox" id={name} disabled={dim} />
                      : kind === 'btn' ? <EditButton aria-label={`${name} ${value}`}>{value}</EditButton>
                      : value.startsWith(' ') ? <>&nbsp;{value.trim()}</> : value}
                  </PropCell>
                  <PropCell />
                </tr>
              );
            })}
          </React.Fragment>
        ))}
      </tbody>
    </PropTable>
    <PaletteFoot><HelpLink href="#help">属性帮助</HelpLink><Apply disabled>应用</Apply></PaletteFoot>
  </Palette>
);

/* ---------- 3D view ---------- */

const View = styled.section`
  display: grid;
  grid-template-columns: minmax(0, 1fr) 15px;
  grid-template-rows: minmax(0, 1fr) 15px;
  border-top: 2px solid #777;
  border-left: 2px solid #777;
  background: #efefef;
`;

const Canvas = styled.div`
  position: relative;
  min-height: 710px;
  background: #fff;
`;

const Scene = styled.svg`
  position: absolute;
  inset: 0;
  width: 100%;
  height: 100%;
`;

const ViewWindowButtons = styled.div`
  position: absolute;
  top: 2px;
  right: 0;
  display: flex;
  gap: 1px;
`;

const CubeSvg = styled.svg`
  position: absolute;
  top: 68px;
  right: 16px;
`;

const NavBar = styled.svg`
  position: absolute;
  top: 170px;
  right: 1px;
`;

const VScroll = styled.div`
  display: flex;
  flex-direction: column;
  align-items: center;
  justify-content: space-between;
  padding: 5px 2px 5px 0;
`;

const Thumbnail = styled.span`
  width: 13px;
  height: 13px;
  background: #cdcdcd;
`;

const ViewBar = styled.div`
  grid-column: 1 / 3;
  display: flex;
  align-items: center;
  padding: 0 0 4px 18px;
`;

const ScaleText = styled.span`
  width: 48px;
  white-space: pre;
`;

const Track = styled.span`
  display: flex;
  flex: 1;
  justify-content: center;
  padding-left: 12px;
`;

const viewTools = ['vcMesh', 'vcBox', 'vcSun', 'vcShadow', 'vcTeapot', 'vcCropX', 'vcCrop', 'vcLock', 'vcGlasses', 'vcBulb', 'vcCrop2', 'vcWorks', 'vcBoxes', 'vcDim'];

const TOP = '#776d6b';
const SIDE = '#7b706e';
const DARK = '#3a3331';

const footings = [[0, 0], [180, 24], [345, 47], [470, 64], [533, 6], [557, -17], [634, -89]];

const Post = ({ x, y1, y2, l1 = y1, l2 = y2, w = 12, s = 5 }: { x: number; y1: number; y2: number; l1?: number; l2?: number; w?: number; s?: number }) => (
  <>
    <path d={`M${x + w} ${l1}h${s}V${l2}h${-s}Z`} fill="#82777a" />
    <path d={`M${x} ${y1}h${w}V${y2}h${-w}Z`} fill={DARK} />
  </>
);

const Building = () => (
  <Scene viewBox="203 148 1242 710" preserveAspectRatio="xMidYMid meet" role="img" aria-label="三层框架模型">
    <defs>
      <filter id="concrete" x="0" y="0" width="1" height="1" colorInterpolationFilters="sRGB">
        <feTurbulence type="fractalNoise" baseFrequency="0.045 0.11" numOctaves="3" seed="7" result="n" />
        <feColorMatrix in="n" values="1 0 0 0 0  1 0 0 0 0  1 0 0 0 0  0 0 0 0 1" result="m" />
        <feComposite in="SourceGraphic" in2="m" operator="arithmetic" k2="1" k3="0.14" k4="-0.07" result="c" />
        <feComposite in="c" in2="SourceAlpha" operator="in" />
      </filter>
    </defs>
    <g filter="url(#concrete)">
      {footings.map(([x, y]) => (
        <g key={x} transform={`translate(${x} ${y})`}>
          <path d="M549 636L557 629H585L574 639Z" fill={TOP} />
          <path d="M574 639L585 629V637L574 648Z" fill={SIDE} />
          <path d="M549 636L574 639V648L549 645Z" fill={DARK} />
        </g>
      ))}
      {/* ground slab and its right-hand beam */}
      <path d="M570 618V608L575 597L647 535L660 524L1029 560L1132 513L1193 523L1204 528L1210 540L1194 557L1047 694L1029 680Z" fill={TOP} />
      {/* far posts and beams */}
      <Post x={1066} y1={430} y2={470} w={12} s={6} />
      <path d="M1110 394L1194 404V416L1110 403Z" fill={DARK} />
      <path d="M1132 394L1194 401V405L1132 397Z" fill={TOP} />
      <Post x={1193} y1={305} y2={528} l1={286} l2={541} w={11} s={6} />
      {/* middle slab */}
      <path d="M570 502V485L575 480L647 417L672 396L1010 448L1023 461L1114 476L1132 482V500L1109 515V600H1029V562Z" fill={TOP} />
      <path d="M1132 465L1193 410L1204 409V427L1132 493Z" fill={SIDE} />
      {/* right-hand posts */}
      <Post x={1114} y1={377} y2={481} l1={370} l2={622} w={12} s={6} />
      <path d="M1114 510L1126 499V600H1114Z" fill={DARK} />
      <Post x={1090} y1={400} y2={503} l1={380} l2={642} w={12} s={7} />
      <path d="M1090 532L1102 522V622H1090Z" fill={DARK} />
      <path d="M1109 502L1132 482V494L1109 514Z" fill={SIDE} />
      <path d="M1047 550L1090 503H1102V522L1090 532L1047 575Z" fill={SIDE} />
      {/* hanging joist ends */}
      <path d="M644 400H656V417H644ZM824 425H836V442H824ZM989 447H1001V464H989ZM644 518H656V535H644ZM824 543H836V560H824ZM989 565H1001V583H989Z" fill={DARK} />
      {/* beams along the front */}
      <path d="M570 498L1029 560V574L570 510ZM570 616L1029 678V691L570 629Z" fill={DARK} />
      {/* roof */}
      <path d="M558 381V378L727 220L1210 285L1204 310L1132 375L1126 382L1111 397L1047 455L1029 446L570 383Z" fill={TOP} />
      <path d="M1047 438L1210 285L1204 310L1132 375L1111 397L1047 455Z" fill={SIDE} />
      <path d="M570 381L1029 443L1041 444V456H1029L570 392Z" fill={DARK} />
      {/* front posts */}
      <Post x={558} y1={380} y2={635} />
      <Post x={739} y1={405} y2={660} w={11} l1={418} />
      <Post x={903} y1={426} y2={683} w={11} s={6} />
      <Post x={1029} y1={443} y2={699} s={6} l1={439} />
    </g>
    <g stroke="#231d1c" strokeDasharray="4 2" fill="none">
      <path d="M732 224L1204 290M570 376L1041 439M570 495L739 518M750 520L903 541M914 543L1029 559M570 613L739 636M750 638L903 659M914 661L1029 677M1132 513L1193 523" />
    </g>
    <path d="M1047 439V456M1047 557V575M1047 674V693M1109 380V396M1109 498V515M1109 617V635M914 427V452M1094 384L1101 380H1109M1117 362L1122 358M1126 358H1132M648 293H655" stroke="#2a2423" fill="none" />
    <path d="M1203 645V659L1206 656L1209 661L1211 660L1209 655H1212Z" fill="#fff" stroke="#222" />
    <path d="M1208 642H1213" stroke="#555" strokeWidth="2" />
  </Scene>
);

const CubeText = styled.text`
  font-family: "Noto Sans CJK SC", sans-serif;
  font-size: 20px;
  fill: #a9a9a9;
  stroke: none;
`;

const ThreeDView = () => (
  <View>
    <Canvas>
      <Building />
      <ViewWindowButtons>
        <ToolButton $w={17} aria-label="最小化视图">
          <IconSvg width="12" height="12" viewBox="0 0 12 12" fill="#fff" stroke="#555"><path d="M1 6H11V9H1Z" /></IconSvg>
        </ToolButton>
        <ToolButton $w={13} aria-label="还原视图">
          <IconSvg width="11" height="12" viewBox="0 0 11 12" fill="#fff" stroke="#555"><path d="M3 1H10V8H3ZM1 3H8V10H1ZM4 5H6V7H4Z" /></IconSvg>
        </ToolButton>
        <ToolButton $w={17} aria-label="关闭视图">
          <IconSvg width="11" height="11" viewBox="0 0 11 11" fill="#fff" stroke="#555"><path d="M1 1H4L5 3L7 1H10L7 5L10 10H7L5 7L4 10H1L4 5Z" /></IconSvg>
        </ToolButton>
      </ViewWindowButtons>
      <CubeSvg width="122" height="90" viewBox="0 0 122 90" fill="none" stroke="#aaa">
        <ellipse cx="61" cy="59" rx="57" ry="24" fill="#f3f3f3" strokeDasharray="3 1" stroke="#c4c4c4" />
        <ellipse cx="61" cy="56" rx="44" ry="18" fill="#fff" stroke="#ccc" />
        <ellipse cx="56" cy="61" rx="28" ry="8" fill="#ddd" stroke="none" />
        <path d="M32 17L50 5L86 9L74 22Z" fill="#f7f7f7" />
        <path d="M32 17L74 22L73 62L33 55Z" fill="#efefef" />
        <path d="M74 22L86 9L85 50L73 62Z" fill="#e2e2e2" />
        <path d="M52 14L66 13M60 9L57 13M46 12L48 12M70 10L72 10M79 26L82 24M78 34L82 31M79 41L81 39" stroke="#999" />
        <CubeText x="42" y="46">前</CubeText>
        <path d="M7 48L20 43M9 43L16 50M13 41L11 51M8 45H19M104 61L118 66M106 65L116 59M112 58L109 68M105 62H117M27 80L50 75M30 82L36 73M36 82L42 73M43 81L48 74M29 76L46 80" stroke="#999" />
      </CubeSvg>
      <NavBar width="31" height="102" viewBox="0 0 31 102" fill="none" stroke="#999">
        <rect x="1" y="1" width="29" height="99" rx="3" fill="#efefef" stroke="#b5b5b5" />
        <circle cx="24" cy="6" r="3" /><circle cx="24" cy="94" r="3" /><path d="M22 94H26" />
        <path d="M16 18H25V27C25 33 20 36 16 36A9 9 0 0 1 16 18Z" fill="#f8f8f8" /><circle cx="16" cy="27" r="5" /><path d="M20 31L23 34M12 31L9 34" />
        <path d="M5 50H27" stroke="#bbb" />
        <path d="M13 43H18L15 46ZM13 79H18L15 82Z" fill="#888" stroke="none" />
        <path d="M9 58H18V67H9Z" fill="#a9cb97" stroke="#9ab98a" /><circle cx="18" cy="67" r="3" fill="#f4f4f4" /><path d="M20 69L23 72" strokeWidth="2" />
      </NavBar>
    </Canvas>
    <VScroll>
      <IconSvg width="9" height="7" viewBox="0 0 9 7" fill="none" stroke="#333" strokeWidth="2"><path d="M1 5L4 2L8 5" /></IconSvg>
      <Thumbnail />
      <IconSvg width="9" height="7" viewBox="0 0 9 7" fill="none" stroke="#333" strokeWidth="2"><path d="M1 1L4 4L8 1" /></IconSvg>
    </VScroll>
    <ViewBar>
      <ScaleText>{'1  :  100'}</ScaleText>
      {viewTools.map(n => <ToolButton key={n} $w={18} aria-label={n}><Icon n={n} /></ToolButton>)}
      <ToolButton $w={16} aria-label="收起">
        <IconSvg width="6" height="8" viewBox="0 0 6 8" fill="none" stroke="#333"><path d="M4 1L1 4L4 7" /></IconSvg>
      </ToolButton>
      <Track><Thumbnail /></Track>
      <ToolButton $w={44} aria-label="向右滚动">
        <IconSvg width="6" height="8" viewBox="0 0 6 8" fill="none" stroke="#333" strokeWidth="2"><path d="M1 1L4 4L1 7" /></IconSvg>
      </ToolButton>
    </ViewBar>
  </View>
);

/* ---------- project browser ---------- */

const Tree = styled.div`
  flex: 1;
  margin: 0 2px 2px 0;
  padding-left: 3px;
  border: 1px solid #ddd;
  border-top: 2px solid #777;
  border-left: 2px solid #777;
`;

const Branch = styled.ul<{ $in?: number }>`
  position: relative;
  margin-left: ${p => p.$in ?? 0}px;
  &::before {
    content: "";
    position: absolute;
    top: 2px;
    bottom: 8px;
    left: 4px;
    border-left: 1px dotted #aaa;
  }
`;

const Line = styled.div`
  display: flex;
  align-items: center;
  height: 17px;
  white-space: nowrap;
`;

const Toggle = styled.button`
  position: relative;
  display: flex;
  width: 9px;
  height: 9px;
  border: 0;
  background: none;
`;

const Blank = styled.span<{ $w: number }>`
  width: ${p => p.$w}px;
`;

const Dots = styled.span<{ $w: number }>`
  width: ${p => p.$w}px;
  margin-right: 1px;
  border-top: 1px dotted #aaa;
`;

const IconSlot = styled.span`
  display: flex;
  justify-content: center;
  width: 15px;
  margin-right: 2px;
`;

const NodeName = styled.span<{ $on?: boolean }>`
  padding: 1px 2px;
  background: ${p => (p.$on ? '#e2e2e2' : 'none')};
`;

type Node = { t: string; icon?: string; open?: boolean; kids?: Node[]; sel?: boolean };
const tree: Node[] = [
  { t: '视图 (全部)', icon: 'tView', open: true, kids: [
    { t: '结构平面', open: true, kids: [{ t: '标高 1' }, { t: '标高 2', sel: true }, { t: '标高 3' }] },
    { t: '三维视图', open: false },
    { t: '立面 (建筑立面)', open: true, kids: [{ t: '东' }, { t: '北' }, { t: '南' }, { t: '西' }] },
  ] },
  { t: '图例', icon: 'tLegend' },
  { t: '明细表/数量', icon: 'tTable' },
  { t: '图纸 (全部)', icon: 'tSheet' },
  { t: '族', icon: 'tFamily', open: false },
  { t: '组', icon: 'tGroup', open: false },
  { t: 'Revit 链接', icon: 'tLink' },
];

const TreeNodes = ({ nodes, level = 0 }: { nodes: Node[]; level?: number }) => (
  <Branch $in={level ? 17 : 0}>
    {nodes.map(n => (
      <li key={n.t}>
        <Line>
          {n.open === undefined ? <Blank $w={level === 2 ? 5 : 9} /> : (
            <Toggle aria-label={`${n.open ? '折叠' : '展开'} ${n.t}`}>
              <IconSvg width="9" height="9" viewBox="0 0 9 9">
                <path d="M.5 .5H8.5V8.5H.5Z" fill="#fff" stroke="#999" />
                <path d={n.open ? 'M2 4.5H7' : 'M2 4.5H7M4.5 2V7'} stroke="#24458f" />
              </IconSvg>
            </Toggle>
          )}
          <Dots $w={level === 0 ? 3 : level === 1 ? 7 : 11} />
          {n.icon && <IconSlot><Icon n={n.icon} /></IconSlot>}
          <NodeName $on={n.sel}>{n.t}</NodeName>
        </Line>
        {n.open && n.kids && <TreeNodes nodes={n.kids} level={level + 1} />}
      </li>
    ))}
  </Branch>
);

/* ---------- status bar ---------- */

const Status = styled.footer`
  display: grid;
  grid-template-columns: minmax(0, 1fr) 490px 346px;
  align-items: center;
  height: 21px;
  border-top: 1px solid #8a8a8a;
  background: #d3d3d3;
`;

const StatusText = styled.span`
  padding-left: 2px;
  white-space: nowrap;
`;

const StatusGroup = styled.div<{ $end?: boolean }>`
  display: flex;
  align-items: center;
  justify-content: ${p => (p.$end ? 'flex-end' : 'flex-start')};
  padding-right: ${p => (p.$end ? 56 : 0)}px;
`;

const Count = styled.span`
  width: 20px;
`;

/* ---------- brand overlay ---------- */

const Brand = styled.div`
  position: absolute;
  right: 86px;
  bottom: 11px;
  display: flex;
  align-items: flex-end;
  gap: 6px;
  opacity: 0.85;
  pointer-events: none;
`;

const BrandWords = styled.div`
  display: flex;
  flex-direction: column;
  align-items: center;
  width: 182px;
`;

const BrandName = styled.span`
  font-family: Roboto, sans-serif;
  font-weight: 700;
  font-size: 32px;
  line-height: 34px;
  color: #5b9fc4;
`;

const BrandSub = styled.span`
  font-size: 15px;
  line-height: 18px;
  color: #5b9fc4;
`;

export default function App() {
  return (
    <>
      <Global />
      <Window>
        <TitleRow />
        <TabBar>
          <Tab $file>文件</Tab>
          {['建筑', '结构', '系统', '插入', '注释', '分析', '体量和场地', '协作', '视图', '管理', '附加模块', '修改'].map(t => (
            <Tab key={t} $on={t === '修改'}>{t}</Tab>
          ))}
          <TabEnd><Icon n="ribbonMin" /><Caret /></TabEnd>
        </TabBar>
        <RibbonArea />
        <Workspace>
          <Properties />
          <ThreeDView />
          <Palette>
            <PaletteTitle>项目浏览器 - 三层框架腿腿-4-2<Icon n="panelX" /></PaletteTitle>
            <Tree><TreeNodes nodes={tree} /></Tree>
          </Palette>
        </Workspace>
        <Status>
          <StatusText>单击可进行选择; 按 Tab 键并单击可选择其他项目; 按 Ctrl 键并单击可将新项目添加到选择集; 按 Shift 键并单击可取消选择。</StatusText>
          <StatusGroup>
            <ToolButton $w={25} aria-label="工作集"><Icon n="people" /></ToolButton>
            <Combo $w={175}><Select aria-label="活动工作集"><option></option></Select><Icon n="chevron" /></Combo>
            <ToolButton $w={27} aria-label="可编辑项"><Icon n="editable" /></ToolButton>
            <Count>:0</Count>
            <ToolButton $w={25} aria-label="设计选项"><Icon n="list" /></ToolButton>
            <ToolButton $w={24} aria-label="排除选项"><Icon n="exclude" /></ToolButton>
            <Combo $w={175}><Select $dim aria-label="设计模型"><option>主模型</option></Select><Icon n="chevron" /></Combo>
          </StatusGroup>
          <StatusGroup $end>
            {['selLink', 'selUnder', 'selPin', 'selFace', 'drag', 'gear', 'filter'].map(n => (
              <ToolButton key={n} $w={22} aria-label={n}><Icon n={n} /></ToolButton>
            ))}
            <span>:0</span>
          </StatusGroup>
        </Status>
        <Brand>
          <IconSvg width="104" height="68" viewBox="0 0 104 68">
            <path d="M1 40L12 36L20 66H8Z" fill="#a9dcc9" />
            <path d="M5 24L18 14L32 16L38 66H20L5 28Z" fill="#6cc4c8" />
            <path d="M17 14L40 1L60 12V30L57 66H46V56C46 52 36 52 36 56V66H24Z" fill="#52bdf5" />
            <path d="M60 20L76 26C80 34 84 48 92 46C97 44 93 40 94 39L102 41C102 52 94 58 86 56C78 54 74 48 62 47L58 60Z" fill="#8cc9e2" />
            <path d="M62 47L78 50L74 66H58Z" fill="#c9dd8e" />
            <path d="M48 66L56 40L68 48L62 66Z" fill="#7dc8bd" />
            <circle cx="67" cy="36" r="2" fill="#fff" />
          </IconSvg>
          <BrandWords>
            <BrandName>TUITUISOFT</BrandName>
            <BrandSub>腿腿教学网</BrandSub>
          </BrandWords>
        </Brand>
      </Window>
    </>
  );
}
